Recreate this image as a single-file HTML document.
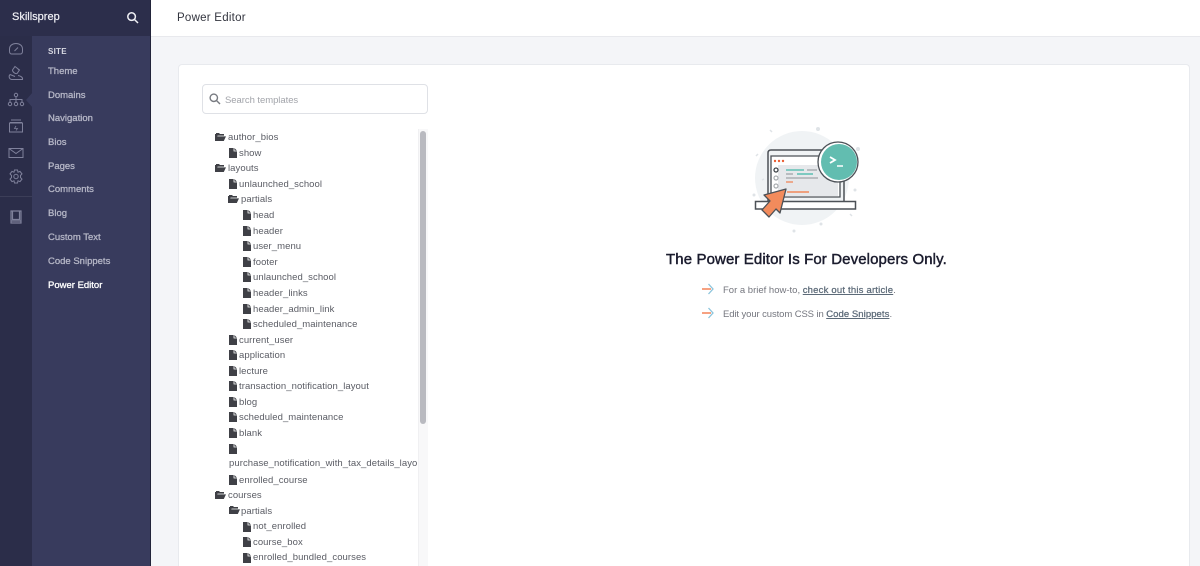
<!DOCTYPE html>
<html><head><meta charset="utf-8"><style>
html,body{margin:0;padding:0;width:1200px;height:566px;overflow:hidden;background:#f4f5f8;font-family:"Liberation Sans",sans-serif}
#wrap{position:absolute;left:0;top:0;width:1200px;height:566px;overflow:hidden;background:#f4f5f8}
.a{position:absolute}
#rail{left:0;top:0;width:32px;height:566px;background:#2b2d49}
#panel{left:32px;top:36px;width:118px;height:530px;background:#383b5d}
#top{left:0;top:0;width:150px;height:36px;background:#2c2e4b}
#edge{left:150px;top:0;width:1px;height:566px;background:#22243a}
#hd{left:151px;top:0;width:1049px;height:36px;background:#fff;border-bottom:1px solid #e8e9ed}
.nav{position:absolute;left:48px;font-size:9.5px;color:#b5b6c6;line-height:12px;white-space:nowrap;-webkit-text-stroke:.3px #b5b6c6}
#card{left:178px;top:64px;width:1010px;height:501px;background:#fff;border:1px solid #e8eaee;border-bottom:0;border-radius:4px 4px 0 0}
#search{left:202px;top:84px;width:224px;height:28px;border:1px solid #dfe1e6;border-radius:4px;background:#fff}
.t{position:absolute;font-size:9.5px;line-height:12px;color:#5a5c64;white-space:nowrap;letter-spacing:.07px;margin-top:1px}
.f{position:absolute;width:8px;height:10px}
.d{position:absolute;width:11px;height:8px}
.lk{color:#5c6a78;text-decoration:underline;-webkit-text-stroke:.25px #5c6a78}
</style></head><body>
<div id="wrap">
<svg width="0" height="0" style="position:absolute"><defs>
<symbol id="file" viewBox="0 0 8 10"><path d="M0 0H4.6V3.4H8V10H0Z M5.4 0L8 2.6H5.4Z" fill="#3f4046"/></symbol>
<symbol id="dir" viewBox="0 0 11 8"><path d="M0 8V1H1V0H4L5 1H9V2.6H2.6L0.6 7L2.2 3.4H11L8.8 8Z" fill="#3f4046"/></symbol>
</defs></svg>

<div class="a" id="rail"></div>
<div class="a" id="top"></div>
<div class="a" id="panel"></div>
<div class="a" id="edge"></div>
<div class="a" style="left:0;top:196px;width:32px;height:1px;background:#3c3e58"></div>
<svg class="a" style="left:26px;top:92px" width="7" height="16"><path d="M7 0V16L0 8Z" fill="#383b5d"/></svg>

<div class="a" style="left:12px;top:10px;font-size:11px;line-height:15px;color:#f0f0f5;-webkit-text-stroke:.2px #f0f0f5">Skillsprep</div>
<svg class="a" style="left:126px;top:11px" width="13" height="13" viewBox="0 0 13 13" fill="none" stroke="#f0f0f5" stroke-width="1.5"><circle cx="5.6" cy="5.6" r="3.8"/><path d="M8.6 8.6L12 12"/></svg>

<svg class="a" style="left:7px;top:41px" width="18" height="190" viewBox="0 0 18 190" fill="none" stroke="#7f819b" stroke-width="1">
<path d="M4.500 13H13.500C15 13 15.500 12 15.500 10V8C15.500 4.500 12.500 2.500 9 2.500S2.500 4.500 2.500 8V10C2.500 12 3 13 4.500 13Z"/><path d="M7.500 10L11 6.500"/>
<g transform="translate(0,24)"><path d="M8 1.500L12.500 5L10 8.500C8 9 5.500 7 5.500 5ZM12.500 5.500L10.500 3.500"/><path d="M3 9.500L8 11.500M3 9.500C1.500 11 2 14 4.500 14.500H15.500C16 12.500 14 11 11 10.500"/></g>
<g transform="translate(0,52)"><circle cx="9" cy="2" r="1.700"/><circle cx="3" cy="11" r="1.700"/><circle cx="9" cy="11" r="1.700"/><circle cx="15" cy="11" r="1.700"/><path d="M9 4V9M3 9V6.500H15V9"/></g>
<g transform="translate(0,78)"><path d="M4 1H14M3 3.500H15M2.500 4H15.500V13H2.500Z"/><path d="M9 7L7.500 9.500H10.500L9 11.500" stroke-width=".8"/></g>
<g transform="translate(0,106)"><path d="M2 1.500H16V10.500H2ZM2 1.500L9 6.500L16 1.500"/></g>
<g transform="translate(0,128)"><path d="M7.500 1H10.500L11 3.200L13 2.400L15 4.900L13.500 6.500V8.500L15 10.100L13 12.600L11 11.800L10.500 14H7.500L7 11.800L5 12.600L3 10.100L4.500 8.500V6.500L3 4.900L5 2.400L7 3.200Z"/><circle cx="9" cy="7.500" r="2.200"/></g>
<g transform="translate(0,169)" stroke-width="1.200"><path d="M4 1H14V13H4ZM5.500 1V9.500H12.500V1M4 11H14"/></g>
</svg>

<div class="a" style="left:48px;top:46px;font-size:8px;line-height:11px;font-weight:bold;color:#d8d9e3;letter-spacing:.25px">SITE</div>
<div class="nav" style="top:66px">Theme</div>
<div class="nav" style="top:90px">Domains</div>
<div class="nav" style="top:113px">Navigation</div>
<div class="nav" style="top:137px">Bios</div>
<div class="nav" style="top:161px">Pages</div>
<div class="nav" style="top:184px">Comments</div>
<div class="nav" style="top:208px">Blog</div>
<div class="nav" style="top:232px">Custom Text</div>
<div class="nav" style="top:256px">Code Snippets</div>
<div class="nav" style="top:280px;color:#fff;-webkit-text-stroke:.3px #fff">Power Editor</div>

<div class="a" id="hd"></div>
<div class="a" style="left:177px;top:11px;font-size:11.500px;line-height:15px;color:#33353f;letter-spacing:.25px">Power Editor</div>

<div class="a" id="card"></div>
<div class="a" id="search"></div>
<svg class="a" style="left:209px;top:93px" width="12" height="12" viewBox="0 0 12 12" fill="none" stroke="#777a80" stroke-width="1.400"><circle cx="4.800" cy="4.800" r="3.700"/><path d="M7.600 7.600L11 11"/></svg>
<div class="a" style="left:225px;top:94px;font-size:9.500px;line-height:12px;color:#a2a4aa;letter-spacing:-.05px;margin-top:0.500px">Search templates</div>

<div class="a" style="left:418px;top:129px;width:10px;height:437px;background:#f8f8f9;border-left:1px solid #f0f0f2;box-sizing:border-box"></div>
<div class="a" style="left:420px;top:131px;width:6px;height:293px;background:#b9bac0;border-radius:3px"></div>

<svg class="d" style="left:215px;top:133px"><use href="#dir"/></svg><div class="t" style="left:228px;top:131px">author_bios</div>
<svg class="f" style="left:229px;top:148px"><use href="#file"/></svg><div class="t" style="left:239px;top:147px">show</div>
<svg class="d" style="left:215px;top:164px"><use href="#dir"/></svg><div class="t" style="left:228px;top:162px">layouts</div>
<svg class="f" style="left:229px;top:179px"><use href="#file"/></svg><div class="t" style="left:239px;top:178px">unlaunched_school</div>
<svg class="d" style="left:228px;top:195px"><use href="#dir"/></svg><div class="t" style="left:241px;top:193px">partials</div>
<svg class="f" style="left:243px;top:210px"><use href="#file"/></svg><div class="t" style="left:253px;top:209px">head</div>
<svg class="f" style="left:243px;top:226px"><use href="#file"/></svg><div class="t" style="left:253px;top:225px">header</div>
<svg class="f" style="left:243px;top:241px"><use href="#file"/></svg><div class="t" style="left:253px;top:240px">user_menu</div>
<svg class="f" style="left:243px;top:257px"><use href="#file"/></svg><div class="t" style="left:253px;top:256px">footer</div>
<svg class="f" style="left:243px;top:272px"><use href="#file"/></svg><div class="t" style="left:253px;top:271px">unlaunched_school</div>
<svg class="f" style="left:243px;top:288px"><use href="#file"/></svg><div class="t" style="left:253px;top:287px">header_links</div>
<svg class="f" style="left:243px;top:304px"><use href="#file"/></svg><div class="t" style="left:253px;top:303px">header_admin_link</div>
<svg class="f" style="left:243px;top:319px"><use href="#file"/></svg><div class="t" style="left:253px;top:318px">scheduled_maintenance</div>
<svg class="f" style="left:229px;top:335px"><use href="#file"/></svg><div class="t" style="left:239px;top:334px">current_user</div>
<svg class="f" style="left:229px;top:350px"><use href="#file"/></svg><div class="t" style="left:239px;top:349px">application</div>
<svg class="f" style="left:229px;top:366px"><use href="#file"/></svg><div class="t" style="left:239px;top:365px">lecture</div>
<svg class="f" style="left:229px;top:381px"><use href="#file"/></svg><div class="t" style="left:239px;top:380px">transaction_notification_layout</div>
<svg class="f" style="left:229px;top:397px"><use href="#file"/></svg><div class="t" style="left:239px;top:396px">blog</div>
<svg class="f" style="left:229px;top:412px"><use href="#file"/></svg><div class="t" style="left:239px;top:411px">scheduled_maintenance</div>
<svg class="f" style="left:229px;top:428px"><use href="#file"/></svg><div class="t" style="left:239px;top:427px">blank</div>
<svg class="f" style="left:229px;top:444px"><use href="#file"/></svg>
<div class="a" style="left:229px;top:457px;width:189px;height:15px;overflow:hidden"><div class="t" style="left:0;top:0">purchase_notification_with_tax_details_layout</div></div>
<svg class="f" style="left:229px;top:475px"><use href="#file"/></svg><div class="t" style="left:239px;top:474px">enrolled_course</div>
<svg class="d" style="left:215px;top:491px"><use href="#dir"/></svg><div class="t" style="left:228px;top:489px">courses</div>
<svg class="d" style="left:229px;top:506px"><use href="#dir"/></svg><div class="t" style="left:241px;top:505px">partials</div>
<svg class="f" style="left:243px;top:522px"><use href="#file"/></svg><div class="t" style="left:253px;top:520px">not_enrolled</div>
<svg class="f" style="left:243px;top:537px"><use href="#file"/></svg><div class="t" style="left:253px;top:536px">course_box</div>
<svg class="f" style="left:243px;top:553px"><use href="#file"/></svg><div class="t" style="left:253px;top:551px">enrolled_bundled_courses</div>

<svg class="a" style="left:750px;top:122px" width="112" height="114" viewBox="0 0 112 114">
<circle cx="52" cy="56" r="47" fill="#f0f3f5"/>
<g fill="#dfe3e7"><circle cx="68" cy="7" r="2"/><circle cx="108" cy="27" r="2"/><circle cx="105" cy="68" r="1.500"/><circle cx="4" cy="73" r="1.500"/><circle cx="71" cy="102" r="1.500"/><circle cx="44" cy="109" r="1.500"/></g>
<g stroke="#dfe3e7" stroke-width="1.500"><path d="M20 8L22 10M6 34L8 32M12 58L14 57M100 92L102 94"/></g>
<path d="M18 79V31Q18 28 21 28H72" fill="none" stroke="#4c5157" stroke-width="1.500"/>
<path d="M94 50V79" fill="none" stroke="#4c5157" stroke-width="1.500"/>
<path d="M21 34H90V75H21Z" fill="#fff" stroke="#4c5157" stroke-width="1.300"/>
<path d="M28 43H88V74H28Z" fill="#e6e8eb"/>
<rect x="5.500" y="79.500" width="100" height="7.500" fill="#fff" stroke="#4c5157" stroke-width="1.500"/>
<g fill="#ea5f34"><circle cx="25" cy="39" r="1.200"/><circle cx="29" cy="39" r="1.200"/><circle cx="33" cy="39" r="1.200"/></g>
<circle cx="26" cy="48" r="2" fill="#fff" stroke="#3f4449" stroke-width="1.300"/>
<circle cx="26" cy="56" r="2" fill="#fff" stroke="#a7abaf" stroke-width="1.200"/>
<circle cx="26" cy="64" r="2" fill="#fff" stroke="#a7abaf" stroke-width="1.200"/>
<g stroke-width="1.300"><path d="M36 48H54" stroke="#45b8a8"/><path d="M57 48H67" stroke="#9fa3a8"/><path d="M36 52H43" stroke="#9fa3a8"/><path d="M47 52H63" stroke="#45b8a8"/><path d="M36 56H68" stroke="#9fa3a8"/><path d="M36 60H43" stroke="#f0875a"/><path d="M37 70H59" stroke="#f0875a" stroke-width="1.500"/></g>
<circle cx="88" cy="40" r="20" fill="#fff" stroke="#4c5157" stroke-width="1.300"/>
<circle cx="89" cy="40" r="18" fill="#62bdb0"/>
<path d="M80 35L85 38L80 41" fill="none" stroke="#fff" stroke-width="1.800"/><path d="M87 44H93" stroke="#fff" stroke-width="1.500"/>
<path d="M36 67L14 73L20 79L12 88L19 95L26 87L30 91Z" fill="#f28b5c" stroke="#4c5157" stroke-width="1.300" stroke-linejoin="round"/>
</svg>

<div class="a" style="left:666px;top:250px;font-size:15px;line-height:19px;color:#1b1c2e;letter-spacing:.11px;white-space:nowrap;-webkit-text-stroke:.45px #1b1c2e">The Power Editor Is For Developers Only.</div>

<svg class="a" style="left:701px;top:283px" width="13" height="12"><path d="M1 6H10" stroke="#f0703f" stroke-width="1.300"/><path d="M7.500 1L12 6L7.500 11" fill="none" stroke="#8cc4dc" stroke-width="1.300"/></svg>
<div class="a" style="left:723px;top:285px;font-size:9.500px;line-height:12px;color:#74767e;white-space:nowrap">For a brief how-to, <span class="lk" style="letter-spacing:.2px">check out this article</span>.</div>
<svg class="a" style="left:701px;top:307px" width="13" height="12"><path d="M1 6H10" stroke="#f0703f" stroke-width="1.300"/><path d="M7.500 1L12 6L7.500 11" fill="none" stroke="#8cc4dc" stroke-width="1.300"/></svg>
<div class="a" style="left:723px;top:309px;font-size:9.500px;line-height:12px;color:#74767e;letter-spacing:-.1px;white-space:nowrap">Edit your custom CSS in <span class="lk" style="letter-spacing:.07px">Code Snippets</span>.</div>
</div>
</body></html>
